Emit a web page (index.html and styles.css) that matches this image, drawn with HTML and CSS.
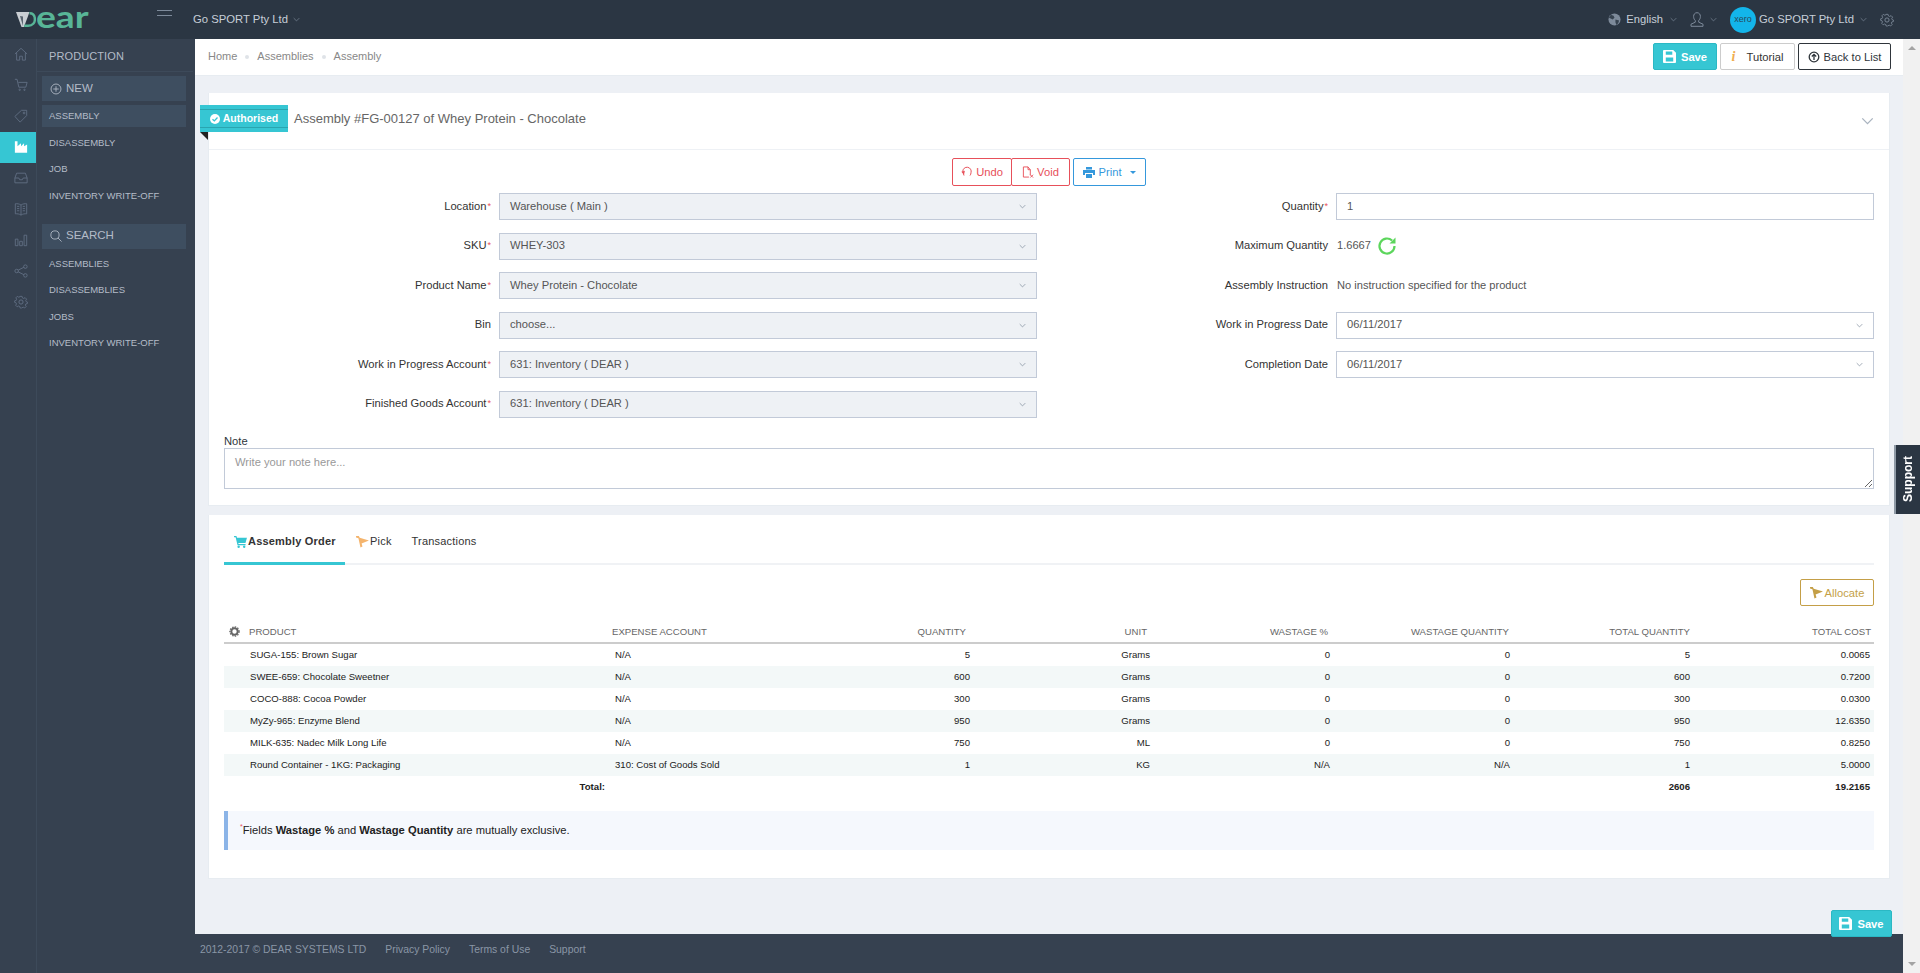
FILE: index.html
```html
<!DOCTYPE html>
<html lang="en">
<head>
<meta charset="utf-8">
<title>Assembly</title>
<link rel="stylesheet" href="styles.css">
</head>
<body>
<svg class="defs" width="0" height="0" aria-hidden="true">
  <symbol id="chev" viewBox="0 0 10 6"><path d="M1 1l4 4 4-4" fill="none" stroke="currentColor" stroke-width="1"/></symbol>
  <symbol id="gear" viewBox="0 0 24 24"><g fill="none" stroke="currentColor" stroke-width="1.6"><circle cx="12" cy="12" r="3.6"/><path d="M10 2h4l.7 3 2.3 1 2.7-1.600 2.800 2.800L20.900 9.900l.9 2.100 2.200.6v3l-2.800.6-1 2.300 1.500 2.600-2.800 2.800-2.600-1.500-2.300 1L13.400 24h-3l-.7-2.800-2.300-1-2.600 1.500L2 18.900l1.500-2.600-1-2.300L0 13.400v-3l2.800-.7 1-2.300L2.300 4.800 5 2l2.600 1.600L10 2.800z" transform="translate(1.100 .5) scale(.91)"/></g></symbol>
  <symbol id="floppy" viewBox="0 0 14 14"><path fill="currentColor" d="M1 0h10l3 3v10a1 1 0 0 1-1 1H1a1 1 0 0 1-1-1V1a1 1 0 0 1 1-1zm2 1.500v3.500h7V1.500zM3 8v4.500h8V8z"/></symbol>
  <symbol id="cart" viewBox="0 0 14 13"><path fill="currentColor" d="M0 0h2.600l.6 2H14l-1.600 5.500H4.600l.3 1.200H12.500V10H3.800L1.700 1.300H0z"/><circle cx="5" cy="11.700" r="1.300" fill="currentColor"/><circle cx="11" cy="11.700" r="1.300" fill="currentColor"/></symbol>
  <symbol id="pick" viewBox="0 0 14 13"><path fill="currentColor" d="M0 0h3l1 2 10 3-8 3 1 3.500-2.200 1L2.600 2.500 0 1.600z"/></symbol>
</svg>

<header class="topbar">
  <div class="logo">
    <svg class="logo-mark" viewBox="0 0 20 15" aria-hidden="true"><path d="M0 0h13.500L8 15H5.500z" fill="#c9ced3"/><path d="M7 14V4.500L4 4z" fill="#5a6570"/><path d="M13.500 1.200c4 0 5.400 3 5.400 6.200s-2.200 6.400-6.600 6.400H8.200" fill="none" stroke="#58b597" stroke-width="2.400"/></svg>
    <span class="logo-text">ear</span>
  </div>
  <div class="burger"><i></i><i></i></div>
  <div class="company">Go SPORT Pty Ltd<svg class="chev"><use href="#chev"/></svg></div>
  <div class="top-right">
    <svg class="globe" viewBox="0 0 14 14" aria-hidden="true"><circle cx="7" cy="7" r="6.500" fill="#7d8a9a"/><path d="M3 2l3 1 1 2-2 2-2-1-2-1zM8 7l4 1-1 3-2 2-1-3z" fill="#36424f"/></svg>
    <span class="lang">English</span><svg class="chev"><use href="#chev"/></svg>
    <svg class="user" viewBox="0 0 14 15" aria-hidden="true"><path d="M7 .7c2.200 0 3.400 1.700 3.400 3.800 0 1.600-.7 3.200-1.700 4.100v1.600l4.300 2v2.100H1v-2.100l4.300-2V8.600C4.300 7.700 3.600 6.100 3.600 4.500 3.600 2.400 4.800.7 7 .7z" fill="none" stroke="#7d8a9a"/></svg>
    <svg class="chev"><use href="#chev"/></svg>
    <span class="xero">xero</span>
    <span class="company-right">Go SPORT Pty Ltd</span><svg class="chev"><use href="#chev"/></svg>
    <svg class="top-gear"><use href="#gear"/></svg>
  </div>
</header>

<div class="shell">
  <nav class="rail">
    <a class="rail-item"><svg viewBox="0 0 16 16"><path d="M1 8l7-6.500L15 8M3 6.500V15h3.500v-4.500h3V15H13V6.500"/></svg></a>
    <a class="rail-item"><svg viewBox="0 0 16 16"><path d="M1 1.500h2.500l2 9h8L15 5H5"/><circle cx="6.500" cy="13.500" r=".8"/><circle cx="12" cy="13.500" r=".8"/></svg></a>
    <a class="rail-item"><svg viewBox="0 0 16 16"><path d="M1 8.500L8.500 1.500h6v6L7 15z"/><circle cx="11.500" cy="4.500" r="1"/></svg></a>
    <a class="rail-item active"><svg viewBox="0 0 16 16"><path class="solid" d="M1 1.500h3V7l4-3.200V7l3.500-3.200V7L15 5v9.500H1z"/></svg></a>
    <a class="rail-item"><svg viewBox="0 0 16 16"><path d="M3 2.500h10L15 8v5.500H1V8zM1 8h4.500l1 2h3l1-2H15"/></svg></a>
    <a class="rail-item"><svg viewBox="0 0 16 16"><path d="M8 3.500C6 2 3.500 1.800 1.500 2v11.500c2-.2 4.500 0 6.500 1.500 2-1.500 4.500-1.700 6.500-1.500V2C12.500 1.800 10 2 8 3.500zM8 3.500V15M3.500 5h2.500M3.500 7.500h2.500M3.500 10h2.500M10 5h2.500M10 7.500h2.500M10 10h2.500"/></svg></a>
    <a class="rail-item"><svg viewBox="0 0 16 16"><path d="M1.500 7h3v7.500h-3zM6.500 9.500h3v5h-3zM11.500 2.500h3v12h-3z"/></svg></a>
    <a class="rail-item"><svg viewBox="0 0 16 16"><circle cx="3" cy="8" r="2"/><circle cx="13" cy="3" r="2"/><circle cx="13" cy="13" r="2"/><path d="M4.800 7l6.400-3.200M4.800 9l6.400 3.200"/></svg></a>
    <a class="rail-item"><svg class="rail-gear"><use href="#gear"/></svg></a>
  </nav>

  <aside class="sidenav">
    <h2 class="sidenav-title">PRODUCTION</h2>
    <div class="sidenav-body">
      <div class="group-head"><svg viewBox="0 0 14 14"><circle cx="7" cy="7" r="5.800"/><path d="M7 3.800v6.400M3.800 7h6.400"/></svg>NEW</div>
      <a class="side-link current">ASSEMBLY</a>
      <a class="side-link">DISASSEMBLY</a>
      <a class="side-link">JOB</a>
      <a class="side-link">INVENTORY WRITE-OFF</a>
      <div class="group-head group-search"><svg viewBox="0 0 14 14"><circle cx="5.800" cy="5.800" r="4.800"/><path d="M9.300 9.300L13.500 13.500"/></svg>SEARCH</div>
      <a class="side-link">ASSEMBLIES</a>
      <a class="side-link">DISASSEMBLIES</a>
      <a class="side-link">JOBS</a>
      <a class="side-link">INVENTORY WRITE-OFF</a>
    </div>
  </aside>

  <div class="main">
    <div class="crumbbar">
      <div class="crumbs"><span>Home</span><i></i><span>Assemblies</span><i></i><span>Assembly</span></div>
      <div class="crumb-actions">
        <button class="btn btn-teal btn-save"><svg class="ico14"><use href="#floppy"/></svg>Save</button>
        <button class="btn btn-light"><span class="info-i">i</span>Tutorial</button>
        <button class="btn btn-dark"><svg class="ico-up" viewBox="0 0 12 12"><circle cx="6" cy="6" r="4.800"/><path d="M6 9V3.500M3.800 5.500L6 3.300l2.200 2.200"/></svg>Back to List</button>
      </div>
    </div>

    <div class="content">
      <section class="card card-form">
        <div class="card-head">
          <div class="ribbon"><div class="ribbon-in"><svg viewBox="0 0 12 12"><circle cx="6" cy="6" r="6" fill="#fff"/><path d="M3 6.200l2.200 2.100L9 4.300" fill="none" stroke="#36c6d3" stroke-width="1.600"/></svg>Authorised</div></div>
          <h1 class="card-title">Assembly #FG-00127 of Whey Protein - Chocolate</h1>
          <svg class="card-chev"><use href="#chev"/></svg>
        </div>
        <div class="toolbar">
          <div class="btn-group">
            <button class="btn btn-red"><svg class="ico-undo" viewBox="0 0 12 12"><path d="M3 9.500L1.800 5.500a4.200 4.200 0 1 1 8.200 1.200c0 1-.4 2-1 2.800"/><path d="M.3 5.800l3.600-1-.9 3.800z" class="fill"/></svg>Undo</button>
            <button class="btn btn-red"><svg class="ico-void" viewBox="0 0 12 13"><path d="M8.500 10V4L6 1H1v11h6"/><path d="M6 1v3h2.500M8.500 9.500l3 3M11.500 9.500l-3 3"/></svg>Void</button>
          </div>
          <button class="btn btn-blue"><svg class="ico-print" viewBox="0 0 12 11"><path fill="currentColor" d="M3 0h6v2.500H3zM0 3h12v5h-2V6H2v2H0zM3 7h6v4H3z"/></svg>Print<span class="caret"></span></button>
        </div>
        <div class="form-grid">
          <div class="form-col">
            <div class="row row-l"><label class="lbl">Location<b>*</b></label><div class="field locked"><span>Warehouse ( Main )</span><svg class="chev"><use href="#chev"/></svg></div></div>
            <div class="row row-l"><label class="lbl">SKU<b>*</b></label><div class="field locked"><span>WHEY-303</span><svg class="chev"><use href="#chev"/></svg></div></div>
            <div class="row row-l"><label class="lbl">Product Name<b>*</b></label><div class="field locked"><span>Whey Protein - Chocolate</span><svg class="chev"><use href="#chev"/></svg></div></div>
            <div class="row row-l"><label class="lbl">Bin</label><div class="field locked"><span>choose...</span><svg class="chev"><use href="#chev"/></svg></div></div>
            <div class="row row-l"><label class="lbl">Work in Progress Account<b>*</b></label><div class="field locked"><span>631: Inventory ( DEAR )</span><svg class="chev"><use href="#chev"/></svg></div></div>
            <div class="row row-l"><label class="lbl">Finished Goods Account<b>*</b></label><div class="field locked"><span>631: Inventory ( DEAR )</span><svg class="chev"><use href="#chev"/></svg></div></div>
          </div>
          <div class="form-col">
            <div class="row row-r"><label class="lbl">Quantity<b>*</b></label><div class="field"><span>1</span></div></div>
            <div class="row row-r"><label class="lbl">Maximum Quantity</label><div class="plain">1.6667<svg class="refresh" viewBox="0 0 20 20"><path d="M17.500 10a7.500 7.500 0 1 1-2.400-5.500" fill="none" stroke="#5cd65c" stroke-width="2.200"/><path d="M18.500 1.500v6h-6z" fill="#5cd65c"/></svg></div></div>
            <div class="row row-r"><label class="lbl">Assembly Instruction</label><div class="plain">No instruction specified for the product</div></div>
            <div class="row row-r"><label class="lbl">Work in Progress Date</label><div class="field"><span>06/11/2017</span><svg class="chev"><use href="#chev"/></svg></div></div>
            <div class="row row-r"><label class="lbl">Completion Date</label><div class="field"><span>06/11/2017</span><svg class="chev"><use href="#chev"/></svg></div></div>
          </div>
        </div>
        <div class="note">
          <label class="note-lbl" for="note">Note</label>
          <textarea id="note" class="note-input" placeholder="Write your note here..."></textarea>
        </div>
      </section>

      <section class="card card-order">
        <div class="tabs">
          <a class="tab tab-active"><svg class="tab-ico teal"><use href="#cart"/></svg>Assembly Order</a>
          <a class="tab"><svg class="tab-ico orange"><use href="#pick"/></svg>Pick</a>
          <a class="tab">Transactions</a>
        </div>
        <div class="alloc-row"><button class="btn btn-gold"><svg class="tab-ico"><use href="#pick"/></svg>Allocate</button></div>
        <div class="grid-head">
          <div class="c-first"><svg class="head-gear" viewBox="0 0 12 12"><circle cx="6" cy="6" r="3.500" fill="none" stroke="#666" stroke-width="2.200"/><circle cx="6" cy="6" r="5" fill="none" stroke="#666" stroke-width="1.400" stroke-dasharray="1.600 1.300"/></svg>PRODUCT</div>
          <div>EXPENSE ACCOUNT</div>
          <div class="num">QUANTITY</div><div class="num">UNIT</div><div class="num">WASTAGE %</div><div class="num">WASTAGE QUANTITY</div><div class="num">TOTAL QUANTITY</div><div class="num">TOTAL COST</div>
        </div>
        <div class="grid-row"><div>SUGA-155: Brown Sugar</div><div>N/A</div><div class="num">5</div><div class="num">Grams</div><div class="num">0</div><div class="num">0</div><div class="num">5</div><div class="num">0.0065</div></div>
        <div class="grid-row alt"><div>SWEE-659: Chocolate Sweetner</div><div>N/A</div><div class="num">600</div><div class="num">Grams</div><div class="num">0</div><div class="num">0</div><div class="num">600</div><div class="num">0.7200</div></div>
        <div class="grid-row"><div>COCO-888: Cocoa Powder</div><div>N/A</div><div class="num">300</div><div class="num">Grams</div><div class="num">0</div><div class="num">0</div><div class="num">300</div><div class="num">0.0300</div></div>
        <div class="grid-row alt"><div>MyZy-965: Enzyme Blend</div><div>N/A</div><div class="num">950</div><div class="num">Grams</div><div class="num">0</div><div class="num">0</div><div class="num">950</div><div class="num">12.6350</div></div>
        <div class="grid-row"><div>MILK-635: Nadec Milk Long Life</div><div>N/A</div><div class="num">750</div><div class="num">ML</div><div class="num">0</div><div class="num">0</div><div class="num">750</div><div class="num">0.8250</div></div>
        <div class="grid-row alt"><div>Round Container - 1KG: Packaging</div><div>310: Cost of Goods Sold</div><div class="num">1</div><div class="num">KG</div><div class="num">N/A</div><div class="num">N/A</div><div class="num">1</div><div class="num">5.0000</div></div>
        <div class="grid-row total"><div class="total-lbl">Total:</div><div></div><div></div><div></div><div></div><div></div><div class="num">2606</div><div class="num">19.2165</div></div>
        <div class="alert"><p class="alert-text"><sup>*</sup>Fields <strong>Wastage %</strong> and <strong>Wastage Quantity</strong> are mutually exclusive.</p></div>
      </section>
      <button class="btn btn-teal btn-float"><svg class="ico14"><use href="#floppy"/></svg>Save</button>
    </div>

    <footer class="footer">
      <span class="copy">2012-2017 © DEAR SYSTEMS LTD</span>
      <a>Privacy Policy</a><a>Terms of Use</a><a>Support</a>
    </footer>
  </div>

  <div class="scrollbar"><span class="arrow up"></span><span class="arrow down"></span></div>
</div>
<div class="support">Support</div>
</body>
</html>
```

FILE: styles.css
```css
* { box-sizing: border-box; }
html, body { height: 100%; }
body {
  margin: 0;
  height: 973px;
  overflow: hidden;
  display: flex;
  flex-direction: column;
  font: 12px/1.2 "Liberation Sans", Arial, sans-serif;
  color: #333;
  background: #364150;
}
.defs { position: absolute; }
a { text-decoration: none; }
button { font-family: inherit; cursor: pointer; }
.chev { width: 7px; height: 5px; color: #7d8a9a; flex: none; }

/* top bar */
.topbar {
  height: 39px;
  flex: none;
  display: flex;
  align-items: center;
  background: #2b3643;
  padding: 0 26px 0 16px;
  color: #c7ced8;
}
.logo { width: 141px; display: flex; align-items: center; height: 20px; }
.logo-mark { width: 20px; height: 15px; flex: none; }
.logo-text {
  font: 700 30px/20px "Lato", sans-serif;
  color: #58b597;
  display: inline-block;
  transform: scaleX(1.24);
  transform-origin: left center;
  margin-top: -7px;
}
.burger { width: 15px; margin-right: 21px; margin-top: -9px; }
.burger i { display: block; height: 1px; background: #7d8a9a; margin-bottom: 4px; }
.company { display: flex; align-items: center; gap: 5px; font-size: 11.3px; }
.top-right { margin-left: auto; display: flex; align-items: center; }
.globe { width: 13px; height: 13px; margin-right: 5px; }
.lang { font-size: 11.2px; margin-right: 7px; }
.user { width: 14px; height: 15px; margin: 0 6px 0 13px; }
.xero {
  width: 26px; height: 26px; border-radius: 50%;
  background: #13b5ea; color: #27495c;
  display: flex; align-items: center; justify-content: center;
  font-size: 9px; margin: 0 3px 0 13px;
}
.company-right { margin-right: 6px; font-size: 11.3px; }
.top-gear { width: 14px; height: 14px; margin-left: 13px; color: #7d8a9a; }

.shell { flex: 1; display: flex; min-height: 0; }

/* icon rail */
.rail { width: 37px; flex: none; background: #364150; border-right: 1px solid #3d4a5a; }
.rail-item { display: flex; width: 36px; height: 30.9px; align-items: center; padding-left: 14px; color: #627085; }
.rail-item svg { width: 14px; height: 14px; fill: none; stroke: currentColor; stroke-width: 1; }
.rail-item .rail-gear { stroke: none; }
.rail-item.active { background: #36c6d3; color: #fff; }
.rail-item .solid { fill: #fff; stroke: none; }

/* section nav */
.sidenav { width: 158px; flex: none; background: #364150; color: #b4bcc8; }
.sidenav-title {
  margin: 0 2px 0 0;
  height: 33px;
  padding: 11px 0 0 12px;
  font-size: 11px;
  font-weight: 400;
  letter-spacing: .1px;
  line-height: 13px;
  color: #b4bcc8;
  border-bottom: 1px solid #3d4a5a;
}
.sidenav-body { display: flex; flex-direction: column; padding: 4px 9px 0 5px; }
.group-head {
  height: 25px;
  display: flex;
  align-items: center;
  padding-left: 8px;
  background: #3e4e60;
  font-size: 11.5px;
  margin-bottom: 4px;
}
.group-head svg { width: 12px; height: 12px; fill: none; stroke: #b4bcc8; stroke-width: 1; margin-right: 4px; }
.group-search { margin-top: 12.5px; }
.side-link {
  height: 22px;
  line-height: 22px;
  padding-left: 7px;
  font-size: 9.5px;
  color: #b4bcc8;
  margin-bottom: 4.500px;
}
.side-link.current { background: #3e4e60; }

/* main column */
.main { flex: 1; min-width: 0; display: flex; flex-direction: column; background: #edf0f5; }
.crumbbar {
  height: 37px;
  flex: none;
  background: #fff;
  border-bottom: 1px solid #e7ecf1;
  display: flex;
  align-items: center;
  justify-content: space-between;
  padding: 0 12px 0 13px;
}
.crumbs { display: flex; align-items: center; color: #888; font-size: 11px; margin-top: -1px; }
.crumbs i { width: 4px; height: 4px; background: #dfe3e8; border-radius: 50%; margin: 0 8px; }
.crumb-actions { display: flex; gap: 3px; margin-top: -1px; }

.btn {
  height: 27px;
  display: inline-flex;
  align-items: center;
  justify-content: center;
  font-size: 11.2px;
  border-radius: 2px;
  border: 1px solid transparent;
  background: #fff;
  padding: 0;
}
.ico14 { width: 13px; height: 13px; margin-right: 5px; }
.btn-teal { background: #36c6d3; color: #fff; font-weight: 700; border-color: #2bb8c4; }
.btn-save { width: 64px; }
.btn-light { width: 75px; border-color: #ccc; color: #333; }
.info-i { color: #f0ad4e; font: italic 700 14px/1 "Liberation Serif", serif; margin-right: 11px; }
.btn-dark { width: 93px; border-color: #2f353b; color: #2f353b; }
.ico-up { width: 12px; height: 12px; margin-right: 4px; fill: none; stroke: #2f353b; stroke-width: 1.300; }

.content { flex: 1; position: relative; padding: 17px 13px 0; min-height: 0; }
.card { background: #fff; border: 1px solid #e7ecf1; border-width: 0 1px 1px 1px; }
.card-form { height: 413px; position: relative; }
.card-head { height: 57px; display: flex; align-items: center; border-bottom: 1px solid #eef1f5; padding: 0 0 4px 85px; }
.card-title { margin: 0; font-size: 13px; font-weight: 400; color: #666; }
.card-chev { width: 13px; height: 8px; margin: 4px 15px 0 auto; color: #a9b3bf; }
.ribbon {
  position: absolute;
  left: -9px;
  top: 12px;
  width: 88px;
  height: 27px;
  background: #36c6d3;
  padding: 4px 0;
}
.ribbon::after {
  content: "";
  position: absolute;
  left: 0;
  top: 27px;
  border-style: solid;
  border-width: 0 8px 8px 0;
  border-color: transparent #222 transparent transparent;
  width: 0;
  height: 0;
}
.ribbon-in {
  height: 19px;
  border-top: 1px solid #2aa5b0;
  border-bottom: 1px solid #2aa5b0;
  display: flex;
  align-items: center;
  justify-content: center;
  color: #fff;
  font-weight: 700;
  font-size: 10.5px;
  gap: 3px;
}
.ribbon-in svg { width: 10px; height: 10px; }

.toolbar { display: flex; justify-content: center; gap: 3px; height: 43px; padding: 8px 0 0; }
.btn-group { display: flex; }
.btn-red { color: #e7505a; border-color: #e7505a; height: 28px; width: 60px; }
.btn-red + .btn-red { width: 59px; margin-left: -1px; }
.btn-red svg { width: 12px; height: 12px; margin-right: 3px; fill: none; stroke: currentColor; stroke-width: 1; }
.btn-red .fill { fill: currentColor; stroke: none; }
.btn-blue { color: #3598dc; border-color: #3598dc; height: 28px; width: 73px; }
.ico-print { width: 12px; height: 11px; margin-right: 3px; }
.caret { border: 3px solid transparent; border-top-color: #3598dc; margin: 3px 0 0 8px; }

.form-grid { display: grid; grid-template-columns: 829px 1fr; column-gap: 12px; padding-right: 15px; }
.form-col { display: flex; flex-direction: column; gap: 12.500px; }
.row { display: grid; column-gap: 8px; height: 27px; align-items: center; }
.row-l { grid-template-columns: 282px 538px; }
.row-r { grid-template-columns: 278px 1fr; }
.lbl { text-align: right; font-size: 11.2px; color: #333; }
.lbl b { color: #e7505a; font-weight: 400; font-size: 9px; vertical-align: 1px; margin-left: 1px; }
.field {
  height: 100%;
  display: flex;
  align-items: center;
  justify-content: space-between;
  padding: 0 10px;
  border: 1px solid #c2cad8;
  color: #555;
  font-size: 11.2px;
}
.field.locked { background: #eef1f5; }
.plain { display: flex; align-items: center; font-size: 11.1px; color: #555; padding-left: 1px; }
.refresh { width: 20px; height: 20px; margin-left: 6px; }

.note { padding: 17px 15px 0 15px; }
.note-lbl { display: block; font-size: 11.2px; color: #2f353b; height: 13px; line-height: 13px; }
.note-input {
  display: block;
  width: 100%;
  height: 41px;
  border: 1px solid #c2cad8;
  padding: 7px 10px 3px;
  font: 11.2px "Liberation Sans", Arial, sans-serif;
  color: #555;
  outline: 0;
  background: #fff;
}
.note-input::placeholder { color: #999; }

.card-order { height: 364px; margin-top: 9px; padding: 0 15px; border-top-width: 0; }
.tabs { display: flex; height: 48px; border-bottom: 2px solid #f0f2f5; box-sizing: content-box; }
.tab {
  height: 48px;
  display: flex;
  align-items: center;
  font-size: 11px;
  color: #333;
  margin-bottom: -2px;
  letter-spacing: .2px;
}
.tab-active { font-weight: 700; width: 121px; border-bottom: 3px solid #36c6d3; padding: 6px 0 0 10px; margin-right: 1px; height: 50px; }
.tab + .tab { padding: 6px 10px 0; }
.tab-ico { width: 13px; height: 12px; margin-right: 1px; }
.teal { color: #36c6d3; }
.orange { color: #f4b46d; }
.alloc-row { display: flex; justify-content: flex-end; padding-top: 14px; height: 60px; }
.btn-gold { width: 74px; color: #c49f47; border-color: #c49f47; }
.btn-gold .tab-ico { margin-right: 2px; }

.grid-head, .grid-row { display: grid; align-items: center; font-size: 9.6px; }
.grid-head {
  grid-template-columns: 384px 180px repeat(6, 181px);
  border-bottom: 2px solid #ccc;
  color: #666;
  padding-bottom: 4px;
  box-sizing: content-box;
  height: 13px;
}
.grid-head > div { padding-left: 4px; }
.grid-head .num { padding-right: 3px; }
.grid-head .c-first { display: flex; align-items: center; padding-left: 5px; }
.head-gear { width: 11px; height: 11px; margin-right: 9px; }
.grid-row { grid-template-columns: 390px repeat(7, 180px); height: 22px; color: #222; }
.grid-row > div:first-child { padding-left: 26px; }
.grid-row > div:nth-child(2) { padding-left: 1px; }
.grid-row.alt { background: #f3f8f8; }
.num { text-align: right; padding-right: 4px; }
.grid-row.total { font-weight: 700; }
.grid-row > .total-lbl { text-align: right; padding-right: 9px; }

.alert {
  margin-top: 13px;
  height: 39px;
  background: #f5f8fd;
  border-left: 4px solid #8bb4e7;
  display: flex;
  align-items: center;
  padding-left: 12px;
  font-size: 11.2px;
  color: #222;
}
.alert-text { margin: 0; }
.alert sup { color: #e7505a; font-size: 7px; line-height: 0; }

.btn-float { position: absolute; right: 11px; bottom: -3px; width: 61px; z-index: 2; }

.footer {
  height: 39px;
  flex: none;
  background: #364150;
  display: flex;
  align-items: center;
  padding: 0 0 7px 5px;
  font-size: 10.4px;
  color: #8a96a6;
}
.footer a { margin-left: 19px; color: #8a96a6; }
.scrollbar {
  width: 17px;
  flex: none;
  background: #f1f1f1;
  display: flex;
  flex-direction: column;
  justify-content: space-between;
  align-items: center;
  padding: 6px 0;
}
.arrow { border: 4px solid transparent; width: 0; height: 0; }
.arrow.up { border-top-width: 0; border-bottom: 4px solid #a3a3a3; margin-top: 1px; }
.arrow.down { border-bottom-width: 0; border-top: 4px solid #a3a3a3; margin-bottom: 1px; }

.support {
  position: fixed;
  right: 0;
  top: 445px;
  width: 26px;
  height: 69px;
  background: #2b3643;
  color: #fff;
  font-weight: 700;
  font-size: 12px;
  writing-mode: vertical-rl;
  transform: rotate(180deg);
  transform-origin: center;
  text-align: center;
  line-height: 24px;
  border-right: 2px solid #8f9aa6;
}
```
